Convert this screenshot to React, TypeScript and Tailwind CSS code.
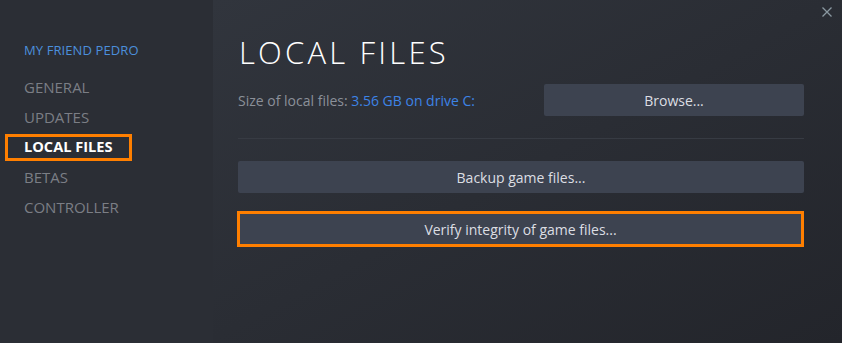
import React from "react";

const navItems = ["GENERAL", "UPDATES", "LOCAL FILES", "BETAS", "CONTROLLER"];

export default function App() {
  return (
    <div
      className="w-[842px] h-[343px] flex overflow-hidden relative"
      style={{ fontFamily: '"Open Sans", "Noto Sans", Arial, sans-serif' }}
    >
      {/* Sidebar */}
      <div className="w-[213px] h-full bg-[#2b2e35] flex flex-col pt-[41px]">
        <div className="pl-[24px] h-[20px] flex items-center text-[13px] text-[#4b8fdc] tracking-[0.1px]">
          MY FRIEND PEDRO
        </div>
        <div className="flex flex-col mt-[11px]">
          {navItems.map((item) =>
            item === "LOCAL FILES" ? (
              <div key={item} className="h-[30px] flex items-center">
                <span className="ml-[5px] pl-[16px] w-[127px] h-[27px] border-[3px] border-[#ff7f00] flex items-center text-[14.6px] font-bold text-[#ffffff]">
                  {item}
                </span>
              </div>
            ) : (
              <div
                key={item}
                className="h-[30px] flex items-center pl-[24px] text-[15px] text-[#7b7e85]"
              >
                {item}
              </div>
            )
          )}
        </div>
      </div>

      {/* Main */}
      <div className="flex-1 h-full bg-linear-to-br from-[#31353d] to-[#23252b] pl-[25px] pr-[38px] pt-[32px] flex flex-col">
        <div className="text-[31px] leading-[40px] font-light text-white tracking-[3.2px] pl-[1px]">
          LOCAL FILES
        </div>
        <div className="mt-[12px] h-[32px] flex items-center justify-between">
          <div className="text-[14px] text-[#8b9099]">
            Size of local files: <span className="text-[#3d83e6]">3.56 GB on drive C:</span>
          </div>
          <button className="w-[260px] h-[32px] bg-[#3d4350] rounded-[2px] text-[14px] text-[#dcdee3]">
            Browse...
          </button>
        </div>
        <div className="mt-[22px] h-[1px] bg-[#373b43]" />
        <button className="mt-[22px] h-[32px] w-full bg-[#3d4350] rounded-[2px] text-[14px] text-[#dcdee3]">
          Backup game files...
        </button>
        <div className="mt-[18px] -ml-[1px] h-[36px] border-[3px] border-[#ff7f00] bg-[#3d4350] flex items-center justify-center text-[14px] text-[#dcdee3]">
          Verify integrity of game files...
        </div>
      </div>

      {/* Close */}
      <svg
        className="absolute left-[822px] top-[7px]"
        width="10"
        height="10"
        viewBox="0 0 10 10"
      >
        <path d="M0.5 0.5 L9.5 9.5 M9.5 0.5 L0.5 9.5" stroke="#8a98a0" strokeWidth="1.3" />
      </svg>
    </div>
  );
}
